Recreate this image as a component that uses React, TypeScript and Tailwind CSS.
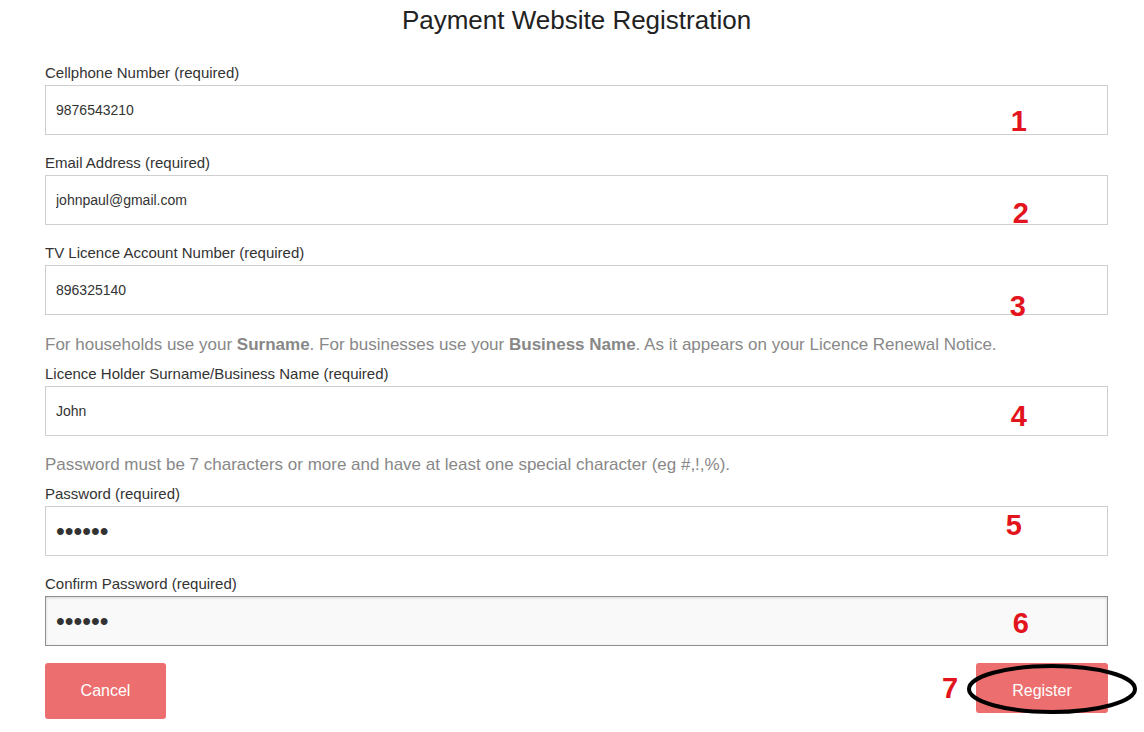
import React from 'react';

type Field = {
    label: string;
    value: string;
    mark: string;
    markClass: string;
    type?: string;
    hint?: React.ReactNode;
    hintClass?: string;
    focused?: boolean;
};

const fields: Field[] = [
    { label: 'Cellphone Number (required)', value: '9876543210', mark: '1', markClass: 'right-[81px] top-[20px]' },
    { label: 'Email Address (required)', value: 'johnpaul@gmail.com', mark: '2', markClass: 'right-[79px] top-[22px]' },
    { label: 'TV Licence Account Number (required)', value: '896325140', mark: '3', markClass: 'right-[82px] top-[25px]' },
    {
        label: 'Licence Holder Surname/Business Name (required)',
        value: 'John',
        mark: '4',
        markClass: 'right-[81px] top-[14px]',
        hintClass: 'mt-[1px]',
        hint: (
            <>
                For households use your <b className="font-bold">Surname</b>. For businesses use your{' '}
                <b className="font-bold">Business Name</b>. As it appears on your Licence Renewal Notice.
            </>
        ),
    },
    {
        label: 'Password (required)',
        value: '123456',
        type: 'password',
        mark: '5',
        markClass: 'right-[86px] top-[3px]',
        hintClass: 'mt-0',
        hint: 'Password must be 7 characters or more and have at least one special character (eg #,!,%).',
    },
    { label: 'Confirm Password (required)', value: '123456', type: 'password', mark: '6', markClass: 'right-[79px] top-[11px]', focused: true },
];

function Mark({ children, className }: { children: string; className: string }) {
    return (
        <span className={`absolute text-[29px] leading-[32px] font-bold text-[#e3141d] pointer-events-none ${className}`}>
            {children}
        </span>
    );
}

export default function App() {
    return (
        <div className="min-h-[732px] bg-white pl-[45px] pr-[36px] font-['Liberation_Sans',Arial,sans-serif] text-[#333]">
            <h1 className="text-center text-[26px] leading-[40px] text-[#222]">Payment Website Registration</h1>

            <div className="flex flex-col">
                {fields.map((f, i) => (
                    <div key={f.label} className={i === 0 ? 'mt-[23px]' : 'mt-[18px]'}>
                        {f.hint && (
                            <p className={`text-[17px] leading-[22px] text-[#888] mb-[8px] ${f.hintClass ?? ''}`}>{f.hint}</p>
                        )}
                        <label className="block text-[15px] leading-[20px] text-[#333]">{f.label}</label>
                        <div className="relative mt-[2px]">
                            <input
                                readOnly
                                type={f.type ?? 'text'}
                                defaultValue={f.value}
                                className={
                                    (f.type === 'password' ? 'text-[25px] ' : 'text-[14px] ') +
                                    (f.focused
                                        ? 'w-full h-[50px] px-[10px] text-[#333] border border-[#8f8f8f] bg-[#f9f9f9] shadow-[inset_0_1px_3px_rgba(0,0,0,0.15)] outline-none'
                                        : 'w-full h-[50px] px-[10px] text-[#333] border border-[#cfcfcf] bg-white outline-none')
                                }
                            />
                            <Mark className={f.markClass}>{f.mark}</Mark>
                        </div>
                    </div>
                ))}
            </div>

            <div className="flex items-start justify-between mt-[17px]">
                <button className="w-[121px] h-[56px] rounded-[3px] bg-[#ec6e6e] text-white text-[16px]">Cancel</button>
                <div className="relative">
                    <button className="w-[132px] h-[50px] pt-[6px] rounded-[3px] bg-[#ec6e6e] text-white text-[16px]">Register</button>
                    <span className="absolute -left-[34px] top-[9px] text-[29px] leading-[32px] font-bold text-[#e3141d]">7</span>
                    <svg className="absolute -left-[10px] top-[0px] pointer-events-none overflow-visible" width="170" height="52" viewBox="0 0 170 52">
                        <ellipse cx="86" cy="26" rx="83" ry="23" fill="none" stroke="#000" strokeWidth="4" />
                    </svg>
                </div>
            </div>
        </div>
    );
}
